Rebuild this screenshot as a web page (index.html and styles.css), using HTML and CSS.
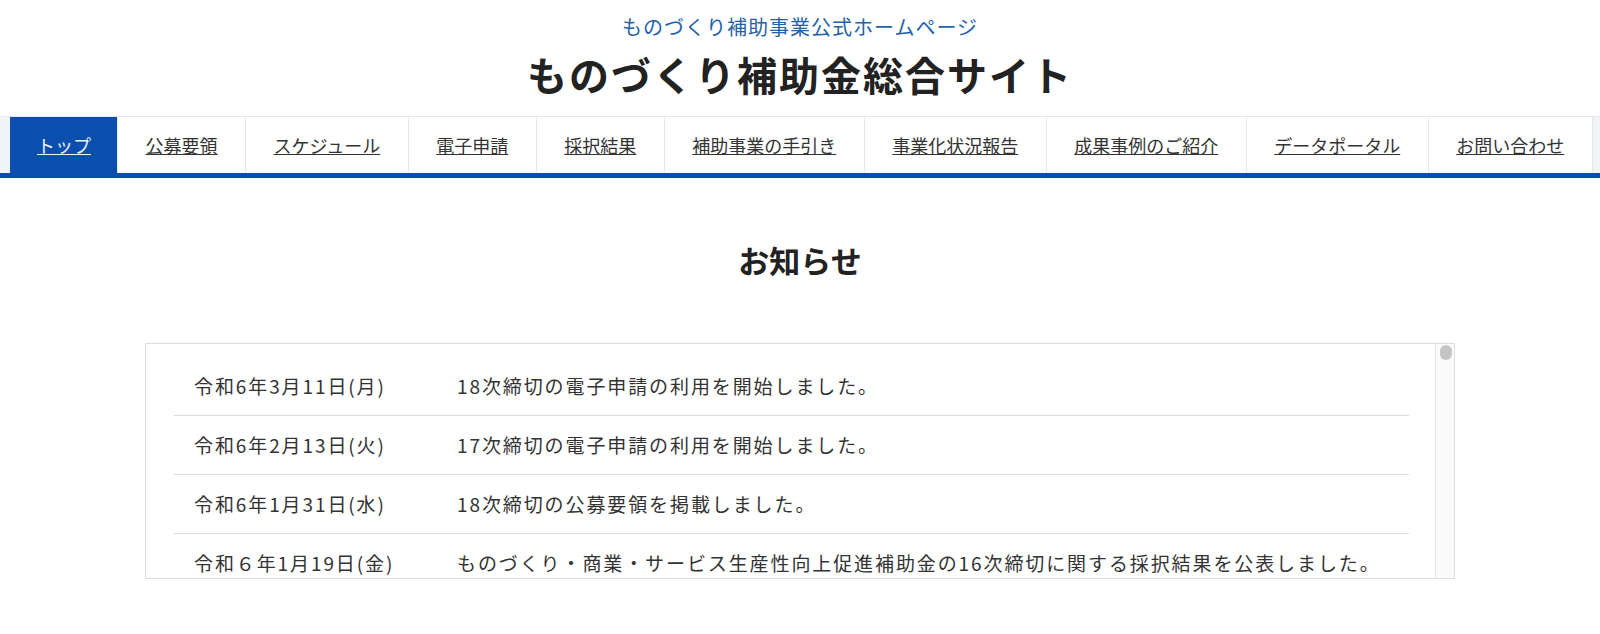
FILE: index.html
```html
<!DOCTYPE html>
<html lang="ja">
<head>
  <meta charset="UTF-8">
  <meta name="viewport" content="width=device-width, initial-scale=1.0">
  <title>ものづくり補助金総合サイト</title>
  <link rel="stylesheet" href="styles.css">
</head>
<body>
  <!-- ヘッダー -->
  <header class="site_header">
    <p class="site_sub">ものづくり補助事業公式ホームページ</p>
    <h1 class="site_title">ものづくり補助金総合サイト</h1>
  </header>

  <!-- グローバルナビ -->
  <nav class="gnav">
    <ul class="gnav_list">
      <li class="gnav_item is_current"><a href="#">トップ</a></li>
      <li class="gnav_item"><a href="#">公募要領</a></li>
      <li class="gnav_item"><a href="#">スケジュール</a></li>
      <li class="gnav_item"><a href="#">電子申請</a></li>
      <li class="gnav_item"><a href="#">採択結果</a></li>
      <li class="gnav_item"><a href="#">補助事業の手引き</a></li>
      <li class="gnav_item"><a href="#">事業化状況報告</a></li>
      <li class="gnav_item"><a href="#">成果事例のご紹介</a></li>
      <li class="gnav_item"><a href="#">データポータル</a></li>
      <li class="gnav_item"><a href="#">お問い合わせ</a></li>
    </ul>
  </nav>

  <!-- お知らせ -->
  <section class="news">
    <h2 class="news_title">お知らせ</h2>
    <div class="news_box">
      <div class="news_scroll">
        <ul class="news_list">
          <li class="news_row">
            <span class="news_date">令和6年3月11日(月)</span>
            <span class="news_text">18次締切の電子申請の利用を開始しました。</span>
          </li>
          <li class="news_row">
            <span class="news_date">令和6年2月13日(火)</span>
            <span class="news_text">17次締切の電子申請の利用を開始しました。</span>
          </li>
          <li class="news_row">
            <span class="news_date">令和6年1月31日(水)</span>
            <span class="news_text">18次締切の公募要領を掲載しました。</span>
          </li>
          <li class="news_row">
            <span class="news_date">令和６年1月19日(金)</span>
            <span class="news_text">ものづくり・商業・サービス生産性向上促進補助金の16次締切に関する採択結果を公表しました。</span>
          </li>
        </ul>
      </div>
      <!-- スクロールバー表示 -->
      <div class="news_bar" aria-hidden="true">
        <span class="news_thumb"></span>
      </div>
    </div>
  </section>
</body>
</html>
```

FILE: styles.css
```css
body {
  margin: 0;
  color: #333;
  font-family: "Noto Sans CJK JP", "Noto Sans", sans-serif;
  background: #fff;
}
ul {
  margin: 0;
  padding: 0;
  list-style: none;
}

/* ヘッダー */
.site_header {
  padding: 12px 0 10px;
  text-align: center;
}
.site_sub {
  margin: 0;
  color: #2462a8;
  font-size: 20px;
  line-height: 30px;
  letter-spacing: 1px;
}
.site_title {
  margin: 0;
  color: #222;
  font-size: 40px;
  font-weight: 700;
  line-height: 64px;
  letter-spacing: 2px;
}

/* グローバルナビ */
.gnav {
  overflow: hidden;
  background: #f2f4f7;
  border-top: 1px solid #e4e7eb;
  border-bottom: 5px solid #0a4fae;
}
.gnav_list {
  display: flex;
  padding-left: 10px;
}
.gnav_item {
  flex-shrink: 0;
  background: #fff;
  border-left: 1px solid #e4e7eb;
}
.gnav_item:last-child {
  border-right: 1px solid #e4e7eb;
}
.gnav_item a {
  display: block;
  padding: 0 27.5px;
  color: #333;
  font-size: 18px;
  line-height: 56px;
}
.gnav_item.is_current {
  background: #0a4fae;
  border-left-color: #0a4fae;
}
.gnav_item.is_current a {
  padding: 0 26px;
  color: #e8f3ff;
}

/* お知らせ */
.news {
  padding-top: 60px;
}
.news_title {
  margin: 0 0 61px;
  color: #222;
  font-size: 31px;
  font-weight: 700;
  line-height: 44px;
  text-align: center;
}
.news_box {
  display: flex;
  width: 1308px;
  height: 234px;
  margin: 0 auto;
  border: 1px solid #dcdcdc;
}
.news_scroll {
  flex: 1;
  overflow: hidden;
}
.news_bar {
  flex: 0 0 18px;
  background: #fafafa;
  border-left: 1px solid #e6e6e6;
}
.news_thumb {
  display: block;
  width: 12px;
  height: 15px;
  margin: 1px 0 0 4px;
  border-radius: 6px;
  background: #c4c4c4;
}
.news_list {
  padding: 13px 26px 0 28px;
}
.news_row {
  display: flex;
  padding: 14px 20px;
  border-bottom: 1px solid #dcdcdc;
  font-size: 19px;
  line-height: 30px;
  letter-spacing: 0.1em;
}
.news_date {
  flex: 0 0 263px;
}
.news_text {
  flex: 1;
}
```
